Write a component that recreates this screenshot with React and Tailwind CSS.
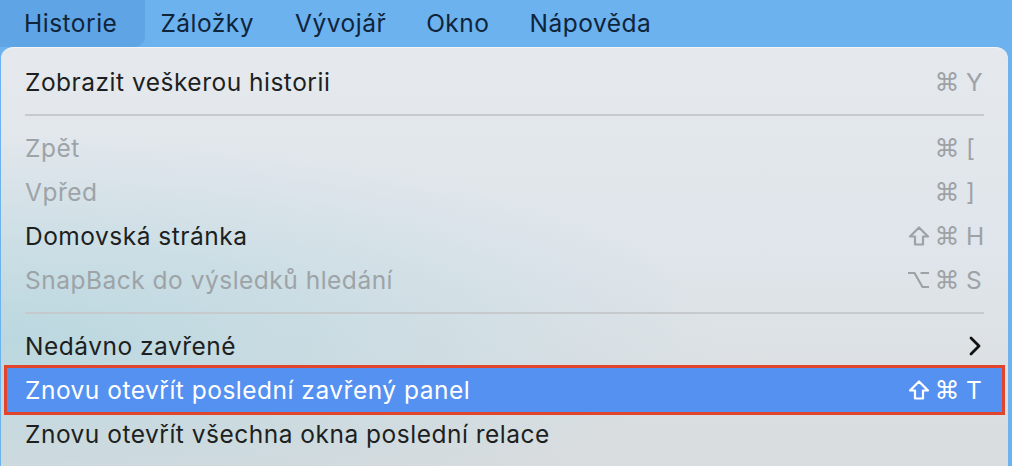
import React from "react";

const menus = ["Historie", "Záložky", "Vývojář", "Okno", "Nápověda"];

const items = [
  { label: "Zobrazit veškerou historii", mods: ["cmd"], key: "Y" },
  { sep: true },
  { label: "Zpět", mods: ["cmd"], key: "[", disabled: true },
  { label: "Vpřed", mods: ["cmd"], key: "]", disabled: true },
  { label: "Domovská stránka", mods: ["shift", "cmd"], key: "H" },
  { label: "SnapBack do výsledků hledání", mods: ["opt", "cmd"], key: "S", disabled: true },
  { sep: true },
  { label: "Nedávno zavřené", submenu: true },
  { label: "Znovu otevřít poslední zavřený panel", mods: ["shift", "cmd"], key: "T", active: true },
  { label: "Znovu otevřít všechna okna poslední relace" },
];

function Mod({ type }) {
  if (type === "shift") {
    return (
      <svg width="22" height="20" viewBox="0 0 22 20" className="shrink-0">
        <path
          d="M11 1.5L20 10.5h-5v8h-8v-8H2z"
          fill="none"
          stroke="currentColor"
          strokeWidth="2.2"
          strokeLinejoin="round"
        />
      </svg>
    );
  }
  if (type === "opt") {
    return (
      <svg width="23" height="18" viewBox="0 0 23 18" className="shrink-0">
        <path
          d="M1 2h6.5l8 14H22M13.5 2H22"
          fill="none"
          stroke="currentColor"
          strokeWidth="2.2"
        />
      </svg>
    );
  }
  return (
    <span className="text-[25px] leading-none" style={{ fontFamily: '"DejaVu Sans", sans-serif' }}>
      ⌘
    </span>
  );
}

function Shortcut({ mods, keyName, active }) {
  return (
    <div
      className={
        "flex items-center gap-[5px] " + (active ? "text-white" : "text-[#9ea2a7]")
      }
    >
      {mods.map((m, i) => (
        <Mod key={i} type={m} />
      ))}
      <span className="w-[18px] ml-[1px] text-[24.5px]">{keyName}</span>
    </div>
  );
}

export default function App() {
  return (
    <div className="w-[1012px] h-[466px] overflow-hidden bg-[#6cb2ee] font-[Inter] tracking-[0.5px] flex flex-col">
      {/* Menu bar */}
      <div className="h-[47px] flex items-stretch shrink-0">
        {menus.map((m, i) => (
          <div
            key={m}
            className={
              "flex items-center text-[24.5px] text-[#10243a] " +
              (i === 0
                ? "pl-[24px] pr-[28px] bg-[#5fa4e4] rounded-br-[10px]"
                : i === 1
                ? "pl-[15px] pr-[21px]"
                : "px-[20px]")
            }
          >
            {m}
          </div>
        ))}
      </div>

      {/* Dropdown */}
      <div className="ml-[1px] w-[1007px] flex-1 rounded-t-[12px] border-t border-[#f3f5f7] bg-gradient-to-b from-[#e5e9ee] via-[#dfe5ea] to-[#d9dcde] relative overflow-hidden pt-[12px]">
        <div className="absolute inset-0 bg-[radial-gradient(ellipse_at_0%_70%,rgba(175,212,222,0.75),transparent_50%)]" />
        <div className="relative flex flex-col">
          {items.map((it, i) =>
            it.sep ? (
              <div key={i} className="h-[22px] flex items-center px-[24px]">
                <div className="h-[2px] w-full bg-[#c6cacd]" />
              </div>
            ) : (
              <div
                key={i}
                className={
                  "h-[44px] flex items-center justify-between text-[24.5px] " +
                  (it.active
                    ? "mx-[6px] px-[18px] bg-[#5591f0] text-white outline-[3px] outline-[#e1452b]"
                    : "px-[24px] " + (it.disabled ? "text-[#9da3a7]" : "text-[#1d1f21]"))
                }
              >
                <span>{it.label}</span>
                {it.submenu ? (
                  <svg width="12" height="20" viewBox="0 0 12 20" className="mr-[3px]">
                    <path d="M2 2l8 8-8 8" fill="none" stroke="#111" strokeWidth="2.8" strokeLinecap="round" strokeLinejoin="round" />
                  </svg>
                ) : it.mods ? (
                  <Shortcut mods={it.mods} keyName={it.key} active={it.active} />
                ) : null}
              </div>
            )
          )}
        </div>
      </div>
    </div>
  );
}
